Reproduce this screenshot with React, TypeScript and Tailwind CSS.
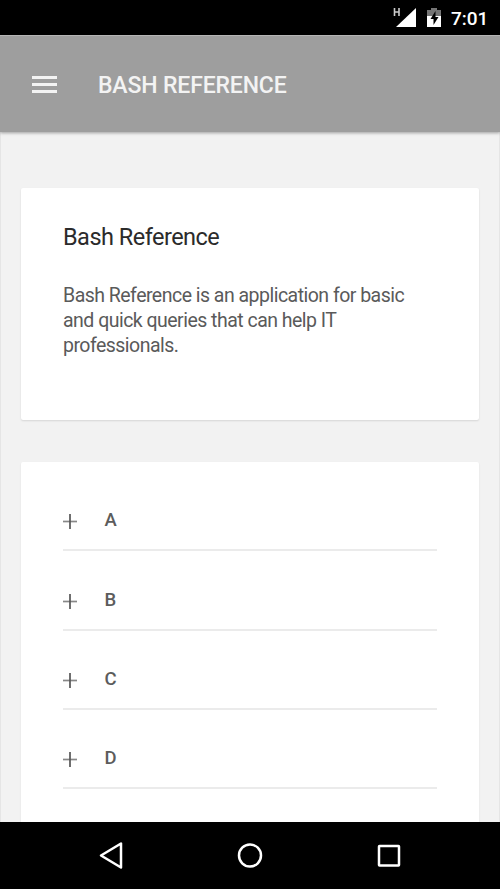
import React from "react";

const sections = ["A", "B", "C", "D"];

function StatusBar() {
  return (
    <div className="flex h-[35px] shrink-0 items-center justify-end bg-black pr-[11px] text-white">
      <svg className="h-[35px] w-[24px]" viewBox="393 0 24 35">
        <path d="M394.5 8v8M399 8v8M394.5 12h4.5" stroke="#ccc" strokeWidth="1.6" fill="none" />
        <path d="M416 8v19h-20z" fill="#fff" />
      </svg>
      <svg className="ml-[10px] h-[35px] w-[14px]" viewBox="427 0 14 35">
        <path d="M431 8h6v2h4v6h-14v-6h4z" fill="#757575" />
        <path d="M427 16h14v11h-14z" fill="#fff" />
        <path d="M435.5 11l-5 8h3v6l5-8h-3z" fill="#000" />
      </svg>
      <span className="ml-[10px] w-[38px] whitespace-nowrap pt-[2px] text-[19px] leading-[35px] font-medium">7:01</span>
    </div>
  );
}

function Toolbar() {
  return (
    <header className="z-10 flex h-[97px] shrink-0 items-center border-t border-[#b5b5b5] bg-[#9e9e9e] pl-8 text-[#f3f3f3] shadow-[0_1px_3px_rgba(0,0,0,0.35)]">
      <div className="flex w-[25px] flex-col gap-[4px]">
        <i className="h-[3px] bg-[#f3f3f3]" />
        <i className="h-[3px] bg-[#f3f3f3]" />
        <i className="h-[3px] bg-[#f3f3f3]" />
      </div>
      <h1 className="ml-[41px] whitespace-nowrap pt-[3px] text-[23px] leading-[28px] font-medium tracking-[-0.15px]">BASH REFERENCE</h1>
    </header>
  );
}

function SectionRow({ label }: { label: string }) {
  return (
    <div className="flex h-[79.3px] shrink-0 items-end border-b-2 border-[#ebebeb] pb-[17px]">
      <svg className="mb-[3px] h-[15px] w-[15px]" viewBox="0 0 15 15">
        <path d="M0 7.5h14" stroke="#888" strokeWidth="1.7" />
        <path d="M7 0v15" stroke="#555" strokeWidth="1.7" />
      </svg>
      <span className="ml-[26.5px] text-[18.5px] leading-6 font-medium text-[#5c5c5c]">{label}</span>
    </div>
  );
}

export default function App() {
  return (
    <div className="flex h-[889px] w-[500px] flex-col overflow-hidden bg-[#f2f2f2] font-[Roboto,sans-serif]">
      <StatusBar />
      <Toolbar />
      <main className="flex min-h-0 flex-1 flex-col overflow-hidden border-x border-[#e5e5e5] px-5 pt-14">
        <section className="h-[232px] shrink-0 rounded-[2px] bg-white px-[42px] pt-[35px] shadow-[0_1px_2px_rgba(0,0,0,0.12)]">
          <h2 className="whitespace-nowrap text-[23.5px] leading-[28px] font-normal tracking-[-0.52px] text-[#2b2b2b]">Bash Reference</h2>
          <p className="mt-[32px] whitespace-nowrap text-[19.5px] leading-[25px] tracking-[-0.52px] text-[#5a5a5a]">
            Bash Reference is an application for basic
            <br />
            and quick queries that can help IT
            <br />
            professionals.
          </p>
        </section>
        <section className="mt-[42px] flex h-[500px] shrink-0 flex-col rounded-[2px] bg-white px-[42px] pt-[10px] shadow-[0_1px_2px_rgba(0,0,0,0.08)]">
          {sections.map((label) => (
            <SectionRow key={label} label={label} />
          ))}
        </section>
      </main>
      <nav className="z-10 h-[67px] shrink-0 bg-black">
        <svg className="h-[67px] w-[500px]" viewBox="0 822 500 67" fill="none" stroke="#fff" strokeWidth="2.5" strokeLinejoin="round">
          <path d="M101 855.5L121 843.5v24z" />
          <circle cx="250" cy="855.5" r="11" />
          <rect x="379" y="846" width="20" height="19.5" rx="0.5" />
        </svg>
      </nav>
    </div>
  );
}
